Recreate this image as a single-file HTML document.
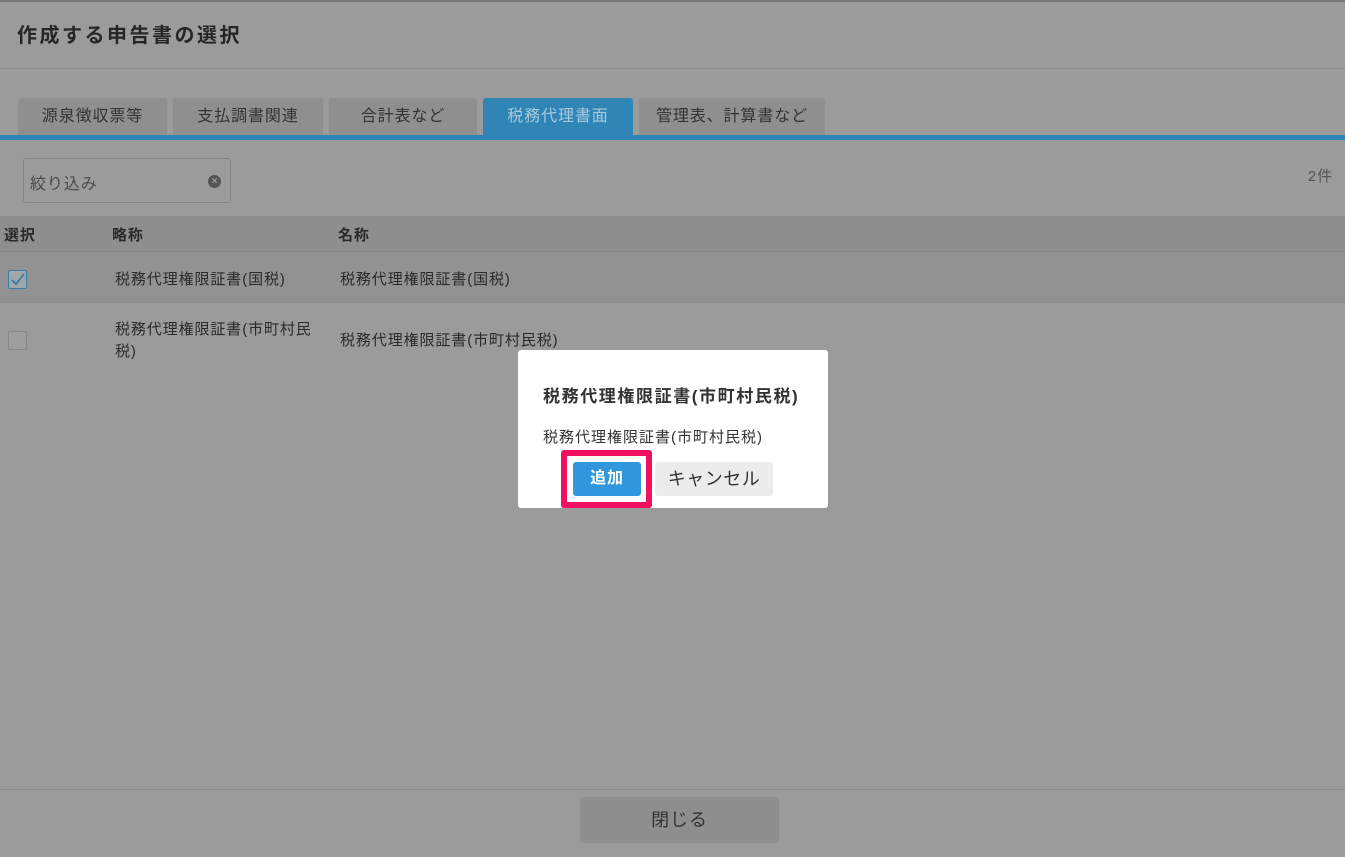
<!DOCTYPE html><html><head><meta charset="utf-8"><style>
body{margin:0;width:1345px;height:857px;background:#9b9b9b;font-family:"Liberation Sans","Noto Sans CJK JP",sans-serif;color:#2a2a2a;position:relative;overflow:hidden;letter-spacing:0.9px}
.a{position:absolute}
.tab{position:absolute;top:98px;height:37px;background:#8f8f8f;border-radius:3px 3px 0 0;font-size:16px;text-align:center;line-height:37px;color:#333}
</style></head><body>
<div class="a" style="left:0;top:0;width:1345px;height:2px;background:#777"></div>
<div class="a" style="left:17px;top:19px;font-size:20px;font-weight:bold;color:#262626;letter-spacing:2.5px">作成する申告書の選択</div>
<div class="a" style="left:0;top:68px;width:1345px;height:1px;background:#8f8f8f"></div>
<div class="tab" style="left:18px;width:149px">源泉徴収票等</div>
<div class="tab" style="left:173px;width:150px">支払調書関連</div>
<div class="tab" style="left:329px;width:148px">合計表など</div>
<div class="tab" style="left:483px;width:150px;background:#2f86b6;color:#a9c9dc">税務代理書面</div>
<div class="tab" style="left:639px;width:186px">管理表、計算書など</div>
<div class="a" style="left:0;top:135px;width:1345px;height:5px;background:#2f86b6"></div>
<div class="a" style="left:23px;top:158px;width:206px;height:43px;border:1px solid #858585;border-radius:3px;background:#9b9b9b"></div>
<div class="a" style="left:30px;top:170px;font-size:16px;color:#4a4a4a">絞り込み</div>
<div class="a" style="left:208px;top:175px;width:13px;height:13px;border-radius:50%;background:#555;color:#9b9b9b;font-size:10px;line-height:13px;text-align:center;font-weight:bold;letter-spacing:0">×</div>
<div class="a" style="right:12px;top:165px;font-size:15px;color:#555">2件</div>
<div class="a" style="left:0;top:216px;width:1345px;height:35px;background:#8e8e8e;border-bottom:1px solid #888"></div>
<div class="a" style="left:4px;top:224px;font-size:15px;font-weight:bold">選択</div>
<div class="a" style="left:112px;top:224px;font-size:15px;font-weight:bold">略称</div>
<div class="a" style="left:338px;top:224px;font-size:15px;font-weight:bold">名称</div>
<div class="a" style="left:0;top:252px;width:1345px;height:50px;background:#929292;border-bottom:1px solid #8c8c8c"></div>
<div class="a" style="left:8px;top:270px;width:17px;height:17px;border:1px solid #3d7ea6;border-radius:2px;background:#a2a6a9"><svg width="17" height="17"><path d="M3 9l4 4 8-10" fill="none" stroke="#2f78a8" stroke-width="1.6"/></svg></div>
<div class="a" style="left:115px;top:268px;font-size:15px">税務代理権限証書(国税)</div>
<div class="a" style="left:340px;top:268px;font-size:15px">税務代理権限証書(国税)</div>
<div class="a" style="left:8px;top:331px;width:17px;height:17px;border:1px solid #888;border-radius:2px;background:#9e9e9e"></div>
<div class="a" style="left:115px;top:319px;font-size:15px;line-height:22px;width:215px">税務代理権限証書(市町村民<br>税)</div>
<div class="a" style="left:340px;top:329px;font-size:15px">税務代理権限証書(市町村民税)</div>
<div class="a" style="left:0;top:789px;width:1345px;height:1px;background:#8c8c8c"></div>
<div class="a" style="left:580px;top:797px;width:199px;height:46px;background:#8e8e8e;border-radius:3px;font-size:18px;text-align:center;line-height:46px;color:#333">閉じる</div>
<div class="a" style="left:518px;top:350px;width:310px;height:158px;background:#fff;border-radius:3px"></div>
<div class="a" style="left:543px;top:382px;font-size:17px;font-weight:bold;color:#333;letter-spacing:1.6px">税務代理権限証書(市町村民税)</div>
<div class="a" style="left:543px;top:426px;font-size:15px;color:#333;letter-spacing:1px">税務代理権限証書(市町村民税)</div>
<div class="a" style="left:561px;top:450px;width:91px;height:58px;background:#f0105f;border-radius:3px"></div>
<div class="a" style="left:567px;top:456px;width:79px;height:46px;background:#fff"></div>
<div class="a" style="left:573px;top:462px;width:68px;height:34px;background:#3097dd;border-radius:3px;color:#fff;font-weight:bold;font-size:16px;text-align:center;line-height:34px">追加</div>
<div class="a" style="left:655px;top:462px;width:118px;height:34px;background:#ececec;border-radius:3px;color:#333;font-size:18px;text-align:center;line-height:34px;letter-spacing:0.5px">キャンセル</div>
</body></html>
